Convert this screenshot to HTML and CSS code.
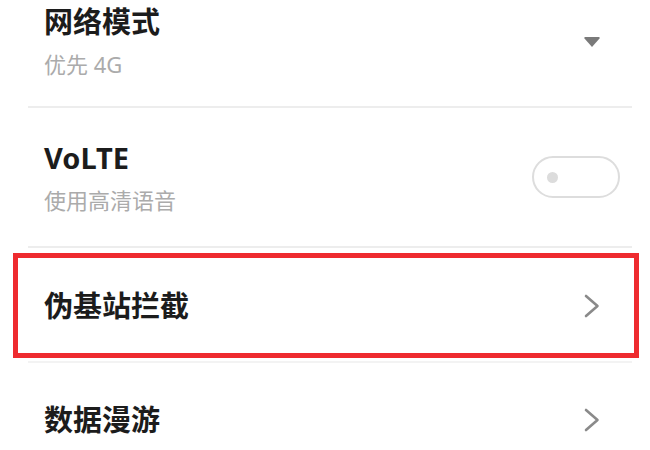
FILE: index.html
```html
<!DOCTYPE html>
<html lang="zh-CN">
<head>
<meta charset="utf-8">
<title>移动网络设置</title>
<link rel="stylesheet" href="styles.css">
</head>
<body>
<div class="list">
  <div class="item item-first">
    <div class="text">
      <div class="title">网络模式</div>
      <div class="sub">优先 4G</div>
    </div>
    <svg class="tri" width="16" height="12" viewBox="0 0 16 12"><path d="M0.5 1 L15.5 1 L15.5 2.5 L8 11 L0.5 2.5 Z" fill="#7a7a7a"/></svg>
  </div>
  <div class="divider"></div>
  <div class="item item-two">
    <div class="text">
      <div class="title">VoLTE</div>
      <div class="sub">使用高清语音</div>
    </div>
    <div class="toggle"><span class="dot"></span></div>
  </div>
  <div class="divider"></div>
  <div class="item-hl">
    <div class="hl-box">
      <div class="title">伪基站拦截</div>
      <svg class="chev" width="16" height="24" viewBox="0 0 16 24"><path d="M2 2 L13.5 12 L2 22" fill="none" stroke="#8a8a8a" stroke-width="2.6" stroke-linecap="round" stroke-linejoin="round"/></svg>
    </div>
  </div>
  <div class="divider divider-faint"></div>
  <div class="item item-last">
    <div class="title">数据漫游</div>
    <svg class="chev" width="16" height="24" viewBox="0 0 16 24"><path d="M2 2 L13.5 12 L2 22" fill="none" stroke="#8a8a8a" stroke-width="2.6" stroke-linecap="round" stroke-linejoin="round"/></svg>
  </div>
</div>
</body>
</html>
```

FILE: styles.css
```css
html, body {
  margin: 0;
  padding: 0;
  background: #ffffff;
}

body {
  width: 650px;
  height: 450px;
  overflow: hidden;
  font-family: "Noto Sans", "Noto Sans CJK SC", sans-serif;
}

.list {
  display: flex;
  flex-direction: column;
}

.item {
  display: flex;
  align-items: center;
  justify-content: space-between;
  box-sizing: border-box;
  padding-left: 44px;
  padding-right: 30px;
}

.item-first {
  height: 106px;
  padding-top: 4px;
  padding-bottom: 27px;
}

.item-two {
  height: 138px;
}

.item-last {
  height: 87px;
  padding-top: 27px;
}

.text {
  display: flex;
  flex-direction: column;
  gap: 9px;
}

.title {
  font-size: 29px;
  line-height: 36px;
  font-weight: 700;
  color: #1c1c1c;
}

.sub {
  font-size: 22px;
  line-height: 30px;
  color: #ababab;
}

.divider {
  height: 2px;
  background: #ededed;
  margin: 0 18px 0 28px;
}

.divider-faint {
  background: #f3f3f3;
}

.tri,
.chev {
  margin-right: 20px;
  flex: none;
}

.toggle {
  box-sizing: border-box;
  width: 88px;
  height: 42px;
  border: 2px solid #dddddd;
  border-radius: 21px;
  display: flex;
  align-items: center;
  padding-left: 13px;
}

.dot {
  width: 11px;
  height: 11px;
  border-radius: 50%;
  background: #dcdcdc;
}

.item-hl {
  box-sizing: border-box;
  height: 113px;
  padding: 5px 11px 3px 13px;
}

.hl-box {
  box-sizing: border-box;
  height: 105px;
  border: 5px solid #ee2b2f;
  display: flex;
  align-items: center;
  justify-content: space-between;
  padding-left: 26px;
  padding-right: 14px;
}
```
